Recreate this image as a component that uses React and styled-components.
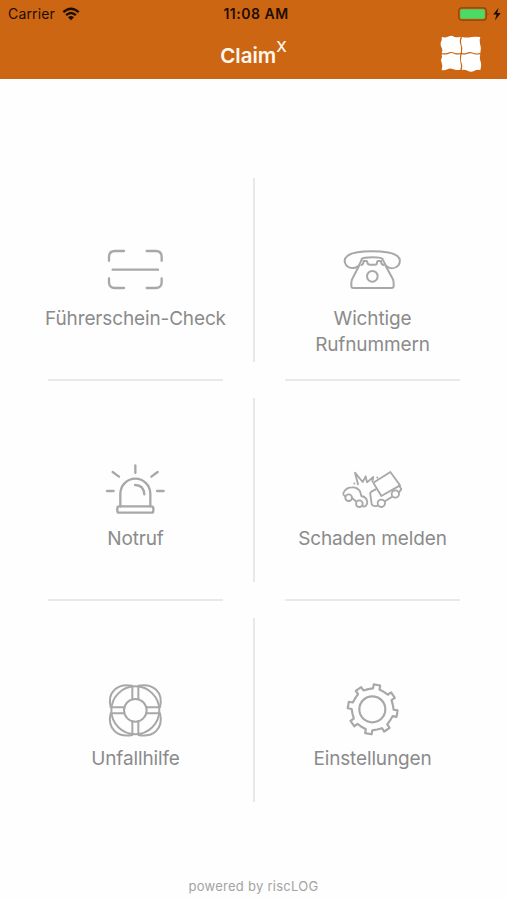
import React from "react";
import styled, { createGlobalStyle } from "styled-components";

const GlobalStyle = createGlobalStyle`
  * {
    box-sizing: border-box;
  }

  body {
    margin: 0;
    background: #fefefe;
    font-family: Inter, "Liberation Sans", sans-serif;
  }
`;

const Screen = styled.div`
  display: flex;
  flex-direction: column;
  width: 507px;
  height: 900px;
  overflow: hidden;
`;

const Header = styled.header`
  height: 79px;
  flex-shrink: 0;
  background: #cd6612;
`;

const StatusBar = styled.div`
  display: grid;
  grid-template-columns: 1fr auto 1fr;
  align-items: center;
  height: 27px;
  padding: 0 5px 0 8px;
  color: #1c0d02;
`;

const Carrier = styled.div`
  display: flex;
  align-items: center;
  gap: 7px;
  font-size: 14px;
  letter-spacing: 0.15px;
`;

const Clock = styled.div`
  padding-left: 2px;
  font-size: 14px;
  font-weight: 600;
  letter-spacing: 0.5px;
`;

const Battery = styled.div`
  display: flex;
  justify-content: flex-end;
`;

const NavBar = styled.div`
  display: grid;
  grid-template-columns: 1fr auto 1fr;
  align-items: center;
  height: 52px;
  padding-right: 25px;
  padding-left: 25px;
`;

const Title = styled.h1`
  grid-column: 2;
  margin: 6px 0 0;
  color: #fff8ef;
  font-size: 20.5px;
  font-weight: 600;
  line-height: 26px;
`;

const Superscript = styled.sup`
  font-size: 15px;
  font-weight: 500;
  line-height: 0;
  vertical-align: 11px;
`;

const LogoButton = styled.button`
  justify-self: end;
  display: flex;
  padding: 0;
  border: 0;
  background: none;
`;

const Menu = styled.main`
  flex: 1;
  padding-top: 81px;
`;

const MenuRow = styled.div`
  display: grid;
  grid-template-columns: 176px 61px 176px;
  height: 220px;
  padding-left: 47.5px;
`;

const Tile = styled.div`
  display: flex;
  flex-direction: column;
  align-items: center;
  padding-top: 75px;
`;

const Label = styled.span`
  margin-top: 1px;
  color: #8b8b8b;
  font-size: 19px;
  line-height: 26px;
  letter-spacing: -0.14px;
  text-align: center;
  white-space: pre;
`;

const Rule = styled.hr`
  width: 175px;
  height: 2px;
  margin: auto 0 -1px;
  border: 0;
  background: #e9e9e9;
`;

const Divider = styled.div`
  justify-self: center;
  width: 2px;
  height: 184px;
  margin-top: 18px;
  background: #e8e8e8;
`;

const Footer = styled.footer`
  padding-bottom: 4px;
  color: #a3a3a3;
  font-size: 13px;
  line-height: 20px;
  letter-spacing: 0.26px;
  text-align: center;
`;

const Glyph = styled.svg`
  flex-shrink: 0;
  width: 90px;
  height: 70px;
  margin-right: 1px;
  fill: none;
  stroke: #a8a8a8;
  stroke-width: ${(props) => props.$weight || 6};
  stroke-linecap: round;
  stroke-linejoin: round;
`;

const ScanIcon = () => (
  <Glyph viewBox="0 0 270 210" $weight={7}>
    <path d="M57 77V66Q57 48 75 48H102M170 48H197Q215 48 215 66V77M215 130V142Q215 159 197 159H170M102 159H75Q57 159 57 142V130M68 104H204" />
  </Glyph>
);

const PhoneIcon = () => (
  <Glyph viewBox="0 0 270 210" $weight={6}>
    <path d="M104 75C99 80 100 89 93 94C82 102 66 101 58 91C51 81 52 70 61 63C84 44 187 44 211 63C220 70 221 82 214 91C205 101 191 102 180 95C172 90 173 79 167 75" />
    <path d="M104 72C112 65 160 65 167 72" />
    <path d="M97 91L76 131Q73 136 73 144V153Q73 159 79 159H193Q200 159 200 153V144Q200 136 197 131L175 91" />
    <path d="M103 90Q110 88 110 78H119Q121 78 121 83Q122 89 129 89H144Q150 89 150 83Q150 78 154 78H162Q162 88 169 90" />
    <circle cx="136" cy="124" r="16" />
  </Glyph>
);

const SirenIcon = () => (
  <Glyph viewBox="0 0 270 210" $weight={7}>
    <path d="M91 154V116A45 45 0 0 1 181 116V154M135 90Q161 90 163 118M136 31V54M68 51L87 65M203 51L184 65M51 108H71M201 108H221" />
    <rect x="82" y="154" width="108" height="19" rx="6" />
  </Glyph>
);

const CrashIcon = () => (
  <Glyph viewBox="0 0 270 210" $weight={5.5}>
    <path d="M55 124Q46 119 50 112Q58 97 75 97Q91 96 99 109L103 123Q119 126 121 141L119 149Q116 156 108 154M76 130L86 138" />
    <circle cx="65" cy="128" r="10" />
    <circle cx="97" cy="146" r="10" />
    <path d="M139 83L190 51L219 91L163 123Z" />
    <path d="M146 103L133 110Q128 113 130 119L134 147Q137 155 150 153M174 139L194 126M215 113L223 103L216 91" />
    <circle cx="163" cy="145" r="11" />
    <circle cx="205" cy="117" r="11" />
    <path d="M93 88L84 53L107 81L116 64L120 82L139 66L136 79M82 85V86M151 67V68" />
  </Glyph>
);

const LifebuoyIcon = () => (
  <Glyph viewBox="0 0 270 210" $weight={6}>
    <circle cx="136" cy="106" r="72" />
    <circle cx="136" cy="106" r="34" />
    <path d="M127 35V73M145 35V73M127 139V177M145 139V177M65 97H103M65 115H103M169 97H207M169 115H207" />
    <path d="M127 32C82 24 51 51 62 97M145 32C190 24 221 51 210 97M62 115C51 161 82 188 127 180M210 115C221 161 190 188 145 180" />
  </Glyph>
);

const GearIcon = () => {
  // eight teeth, turned ten degrees clockwise
  const points = [];
  for (let i = 0; i < 8; i++) {
    [
      [-9, 63],
      [-7.5, 75],
      [7.5, 75],
      [9, 63],
      [22.5, 62],
    ].forEach(([offset, radius]) => {
      const angle = ((i * 45 + 10 + offset) * Math.PI) / 180;
      points.push(
        `${(137 + radius * Math.sin(angle)).toFixed(1)},${(
          103 -
          radius * Math.cos(angle)
        ).toFixed(1)}`
      );
    });
  }

  return (
    <Glyph viewBox="0 0 270 210" $weight={6.5}>
      <polygon points={points.join(" ")} />
      <circle cx="136" cy="103" r="39" />
    </Glyph>
  );
};

const WifiIcon = () => (
  <svg width="18" height="14" viewBox="0 0 18 14" fill="none">
    <g stroke="#1c0d02" strokeWidth="2.3">
      <path d="M1.3 5.2Q9 -1.8 16.7 5.2" />
      <path d="M4.1 8.2Q9 3.8 13.9 8.2" />
    </g>
    <path d="M6 10.3Q9 7.6 12 10.3L9 13.3Z" fill="#1c0d02" />
  </svg>
);

const BatteryIcon = () => (
  <svg width="44" height="14" viewBox="0 0 44 14">
    <rect
      x="0.8"
      y="0.8"
      width="27.4"
      height="12.4"
      rx="2.8"
      fill="none"
      stroke="#8a430b"
      strokeWidth="1.2"
    />
    <rect x="2.2" y="2.2" width="24.6" height="9.6" rx="1.5" fill="#4cd964" />
    <path d="M29.6 5Q31.4 7 29.6 9Z" fill="#8a430b" />
    <path d="M40.6 0.8L35.2 7.6H38.6L36.8 13.4L42.8 6H39.2Z" fill="#1c0d02" />
  </svg>
);

const PuzzleLogo = () => (
  <svg width="42" height="37" viewBox="0 0 126 111" fill="#fff">
    <path d="M5 6Q15 9 24 5Q34 0 42 5Q50 9 62 5Q58 15 60 25Q65 36 62 54Q48 56 39 52Q30 49 24 53Q13 56 5 54Q9 46 5 38Q-1 27 4 19Q6 13 5 6Z" />
    <path d="M66 6Q82 9 94 6Q109 4 121 6Q117 16 120 26Q125 38 121 54Q108 57 99 53Q88 49 79 54Q72 56 66 54Q69 39 64 28Q61 18 66 6Z" />
    <path d="M5 58Q15 60 25 57Q34 52 42 56Q51 60 61 58Q58 69 61 80Q65 92 61 104Q49 107 40 103Q30 98 22 103Q13 107 5 105Q9 91 5 83Q1 73 6 67Z" />
    <path d="M65 58Q73 60 81 57Q91 53 101 57Q110 60 121 58Q118 68 121 77Q126 88 121 105Q110 103 102 108Q92 113 83 107Q75 103 65 105Q69 92 64 82Q61 71 65 58Z" />
  </svg>
);

const rows = [
  [
    { label: "Führerschein-Check", Icon: ScanIcon },
    { label: "Wichtige\nRufnummern", Icon: PhoneIcon },
  ],
  [
    { label: "Notruf", Icon: SirenIcon },
    { label: "Schaden melden", Icon: CrashIcon },
  ],
  [
    { label: "Unfallhilfe", Icon: LifebuoyIcon },
    { label: "Einstellungen", Icon: GearIcon },
  ],
];

const MenuTile = ({ item, ruled }) => (
  <Tile>
    <item.Icon />
    <Label>{item.label}</Label>
    {ruled && <Rule />}
  </Tile>
);

const App = () => {
  return (
    <Screen>
      <GlobalStyle />
      <Header>
        <StatusBar>
          <Carrier>
            Carrier
            <WifiIcon />
          </Carrier>
          <Clock>11:08 AM</Clock>
          <Battery>
            <BatteryIcon />
          </Battery>
        </StatusBar>
        <NavBar>
          <Title>
            Claim<Superscript>X</Superscript>
          </Title>
          <LogoButton aria-label="riscLOG">
            <PuzzleLogo />
          </LogoButton>
        </NavBar>
      </Header>

      <Menu>
        {rows.map(([left, right], index) => (
          <MenuRow key={index}>
            <MenuTile item={left} ruled={index < rows.length - 1} />
            <Divider />
            <MenuTile item={right} ruled={index < rows.length - 1} />
          </MenuRow>
        ))}
      </Menu>

      <Footer>powered by riscLOG</Footer>
    </Screen>
  );
};

export default App;
